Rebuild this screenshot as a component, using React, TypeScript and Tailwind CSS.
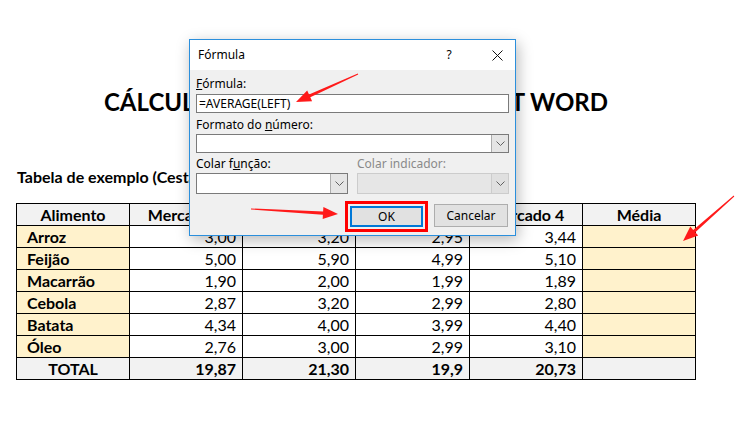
import React from "react";

const rows = [
  { name: "Arroz", v: ["3,00", "3,20", "2,95", "3,44"] },
  { name: "Feijão", v: ["5,00", "5,90", "4,99", "5,10"] },
  { name: "Macarrão", v: ["1,90", "2,00", "1,99", "1,89"] },
  { name: "Cebola", v: ["2,87", "3,20", "2,99", "2,80"] },
  { name: "Batata", v: ["4,34", "4,00", "3,99", "4,40"] },
  { name: "Óleo", v: ["2,76", "3,00", "2,99", "3,10"] },
];

const totals = ["19,87", "21,30", "19,9", "20,73"];

// tapered snagit-like arrow, thin at the tail and fat near the head
function arrowPoints(x1: number, y1: number, x2: number, y2: number) {
  const dx = x2 - x1;
  const dy = y2 - y1;
  const len = Math.sqrt(dx * dx + dy * dy);
  const ux = dx / len;
  const uy = dy / len;
  const nx = -uy;
  const ny = ux;
  const headLen = 15;
  const headW = 6;
  const bx = x2 - ux * headLen;
  const by = y2 - uy * headLen;
  const p = (x: number, y: number) => `${x.toFixed(1)},${y.toFixed(1)}`;
  return [
    p(x1 + nx * 0.5, y1 + ny * 0.5),
    p(bx + nx * 1.6, by + ny * 1.6),
    p(bx + nx * headW, by + ny * headW),
    p(x2, y2),
    p(bx - nx * headW, by - ny * headW),
    p(bx - nx * 1.6, by - ny * 1.6),
    p(x1 - nx * 0.5, y1 - ny * 0.5),
  ].join(" ");
}

function Chevron() {
  return (
    <svg className="w-[9px] h-[6px]" viewBox="0 0 9 6" fill="none" stroke="#606060" strokeWidth={1}>
      <path d="M0.5 0.5l4 4 4-4" />
    </svg>
  );
}

function Combo({ width, disabled }: { width: string; disabled?: boolean }) {
  return (
    <div className={`${width} h-[21px] flex border ${disabled ? "border-[#cccccc] bg-[#e6e6e6]" : "border-[#7a7a7a] bg-white"}`}>
      <div className="flex-1" />
      <div className={`w-[17px] flex items-center justify-center border-l ${disabled ? "border-[#cccccc] bg-[#e0e0e0]" : "border-[#acacac] bg-[#e5e5e5]"}`}>
        <Chevron />
      </div>
    </div>
  );
}

export default function App() {
  return (
    <div className="relative w-[740px] h-[431px] bg-white overflow-hidden" style={{ fontFamily: "Lato, 'Open Sans', sans-serif" }}>
      {/* document */}
      <div className="pl-[16px] pt-[87px]">
        <h1 className="w-[680px] text-center text-[24px] font-bold text-black leading-[30px] whitespace-nowrap">
          CÁLCULO DE MÉDIA NO MICROSOFT WORD
        </h1>
        <p className="mt-[50px] pl-[1px] text-[16px] font-bold text-black leading-[20px]">
          Tabela de exemplo (Cesta básica)
        </p>
        <table className="mt-[16px] border-collapse text-[16px] text-black table-fixed w-[680px]">
          <colgroup>
            <col className="w-[113px]" />
            <col className="w-[113px]" />
            <col className="w-[113px]" />
            <col className="w-[114px]" />
            <col className="w-[113px]" />
            <col className="w-[113px]" />
          </colgroup>
          <thead>
            <tr className="h-[22px] bg-[#f2f2f2] font-bold">
              {["Alimento", "Mercado 1", "Mercado 2", "Mercado 3", "Mercado 4", "Média"].map((h) => (
                <th key={h} className="border border-black p-0 text-center font-bold leading-[20px]">
                  {h}
                </th>
              ))}
            </tr>
          </thead>
          <tbody>
            {rows.map((r) => (
              <tr key={r.name} className="h-[22px]">
                <td className="border border-black bg-[#fff2cc] pl-[10px] font-bold leading-[20px]">{r.name}</td>
                {r.v.map((v, i) => (
                  <td key={i} className="border border-black text-right pr-[6px] leading-[20px]">
                    {v}
                  </td>
                ))}
                <td className="border border-black bg-[#fff2cc]" />
              </tr>
            ))}
            <tr className="h-[22px] bg-[#f2f2f2] font-bold">
              <td className="border border-black text-center leading-[20px]">TOTAL</td>
              {totals.map((t, i) => (
                <td key={i} className="border border-black text-right pr-[6px] leading-[20px]">
                  {t}
                </td>
              ))}
              <td className="border border-black" />
            </tr>
          </tbody>
        </table>
      </div>

      {/* dialog */}
      <div
        className="absolute left-[189px] top-[39px] w-[327px] h-[197px] border border-[#2b8fdc] bg-[#f0f0f0] shadow-[2px_4px_14px_rgba(0,0,0,0.28)] text-[12px] text-black flex flex-col"
        style={{ fontFamily: "'Segoe UI', 'Noto Sans', sans-serif" }}
      >
        <div className="h-[30px] bg-white flex items-center pl-[8px] pr-[12px]">
          <span className="flex-1 text-[12px]">Fórmula</span>
          <span className="w-[12px] text-center mr-[37px]">?</span>
          <svg className="w-[11px] h-[11px]" viewBox="0 0 11 11" stroke="#111" strokeWidth={1}>
            <path d="M0.5 0.5l10 10M10.5 0.5l-10 10" />
          </svg>
        </div>
        <div className="flex flex-col px-[6px] pt-[6px]">
          <span className="leading-[16px]">
            <span className="underline">F</span>órmula:
          </span>
          <div className="mt-[2px] h-[19px] w-[313px] border border-[#7a7a7a] bg-white flex items-center pl-[2px] leading-none">
            =AVERAGE(LEFT)
          </div>
          <span className="mt-[4px] leading-[16px]">
            Formato do <span className="underline">n</span>úmero:
          </span>
          <div className="mt-[1px] h-[19px] w-[313px] flex border border-[#7a7a7a] bg-white">
            <div className="flex-1" />
            <div className="w-[17px] flex items-center justify-center border-l border-[#acacac] bg-[#e5e5e5]">
              <Chevron />
            </div>
          </div>
          <div className="mt-[3px] flex gap-[9px]">
            <div className="flex flex-col gap-[1px]">
              <span className="leading-[16px]">
                Colar f<span className="underline">u</span>nção:
              </span>
              <Combo width="w-[152px]" />
            </div>
            <div className="flex flex-col gap-[1px]">
              <span className="leading-[16px] text-[#8a8a8a]">Colar indicador:</span>
              <Combo width="w-[152px]" disabled />
            </div>
          </div>
          <div className="mt-[10px] flex justify-end gap-[6px] pr-[1px]">
            <div className="border-[3px] border-[#ff0000] p-[2px] -my-[3px]">
              <button className="w-[73px] h-[21px] border-2 border-[#0078d7] bg-[#e1e1e1] text-[12px]">OK</button>
            </div>
            <button className="w-[74px] h-[23px] border border-[#adadad] bg-[#e1e1e1] text-[12px]">Cancelar</button>
          </div>
        </div>
      </div>

      {/* red annotation arrows */}
      <svg className="absolute left-0 top-0 w-[740px] h-[431px] pointer-events-none" viewBox="0 0 740 431">
        <polygon points={arrowPoints(358, 74, 296, 102)} fill="#ff1a1a" />
        <polygon points={arrowPoints(251, 209, 338, 214)} fill="#ff1a1a" />
        <polygon points={arrowPoints(734, 196, 683, 241)} fill="#ff1a1a" />
      </svg>
    </div>
  );
}
